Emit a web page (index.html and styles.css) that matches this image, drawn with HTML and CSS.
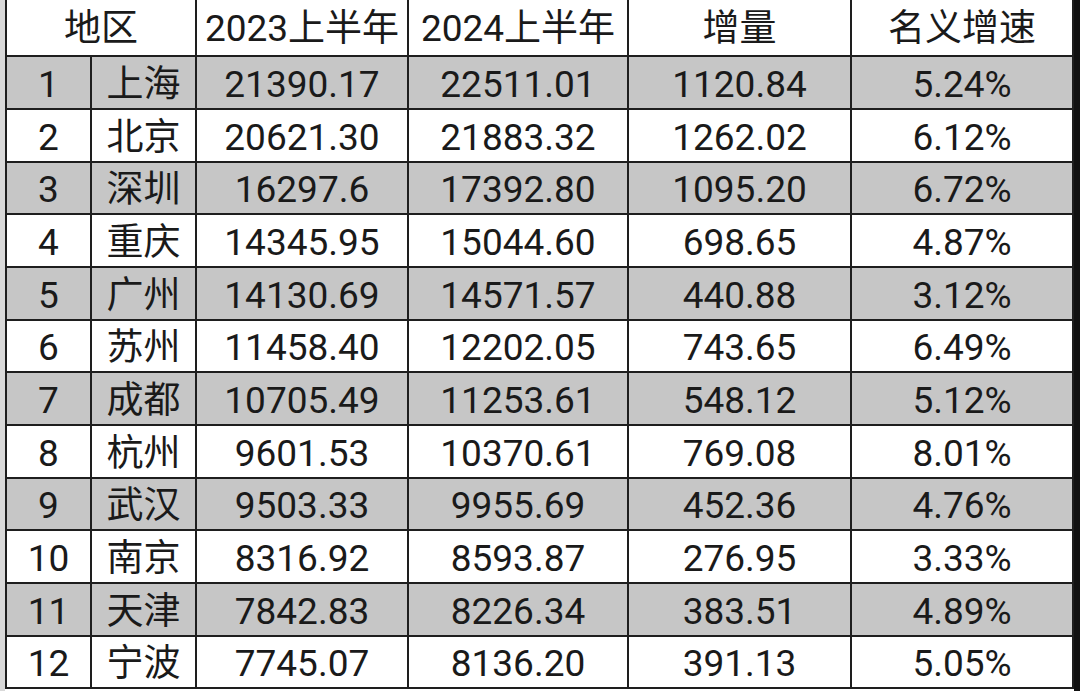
FILE: index.html
```html
<!DOCTYPE html>
<html lang="zh-CN">
<head>
<meta charset="utf-8">
<title>2024上半年城市GDP</title>
<link rel="stylesheet" href="styles.css">
</head>
<body>
<div class="frame">
  <div class="edge-left"></div>
  <table class="gdp">
    <colgroup>
      <col class="c-rank"><col class="c-city"><col class="c-y23"><col class="c-y24"><col class="c-inc"><col class="c-rate">
    </colgroup>
    <thead>
      <tr class="head"><th colspan="2">地区</th><th>2023上半年</th><th>2024上半年</th><th>增量</th><th>名义增速</th></tr>
    </thead>
    <tbody>
      <tr class="g r53"><td>1</td><td>上海</td><td>21390.17</td><td>22511.01</td><td>1120.84</td><td>5.24%</td></tr>
      <tr class="w r53"><td>2</td><td>北京</td><td>20621.30</td><td>21883.32</td><td>1262.02</td><td>6.12%</td></tr>
      <tr class="g r52"><td>3</td><td>深圳</td><td>16297.6</td><td>17392.80</td><td>1095.20</td><td>6.72%</td></tr>
      <tr class="w r53"><td>4</td><td>重庆</td><td>14345.95</td><td>15044.60</td><td>698.65</td><td>4.87%</td></tr>
      <tr class="g r53"><td>5</td><td>广州</td><td>14130.69</td><td>14571.57</td><td>440.88</td><td>3.12%</td></tr>
      <tr class="w r52"><td>6</td><td>苏州</td><td>11458.40</td><td>12202.05</td><td>743.65</td><td>6.49%</td></tr>
      <tr class="g r53"><td>7</td><td>成都</td><td>10705.49</td><td>11253.61</td><td>548.12</td><td>5.12%</td></tr>
      <tr class="w r53"><td>8</td><td>杭州</td><td>9601.53</td><td>10370.61</td><td>769.08</td><td>8.01%</td></tr>
      <tr class="g r52"><td>9</td><td>武汉</td><td>9503.33</td><td>9955.69</td><td>452.36</td><td>4.76%</td></tr>
      <tr class="w r53"><td>10</td><td>南京</td><td>8316.92</td><td>8593.87</td><td>276.95</td><td>3.33%</td></tr>
      <tr class="g r53"><td>11</td><td>天津</td><td>7842.83</td><td>8226.34</td><td>383.51</td><td>4.89%</td></tr>
      <tr class="w r52"><td>12</td><td>宁波</td><td>7745.07</td><td>8136.20</td><td>391.13</td><td>5.05%</td></tr>
    </tbody>
  </table>
  <div class="edge-right"></div>
</div>
</body>
</html>
```
FILE: styles.css
```css
html, body {
  margin: 0;
  padding: 0;
  background: #ffffff;
  overflow: hidden;
}

.frame {
  display: flex;
  width: 1080px;
  height: 691px;
  overflow: hidden;
}

.edge-left {
  width: 5px;
  flex: 0 0 5px;
  background: #d9d9d9;
}

.edge-right {
  flex: 1 1 auto;
  background: #111111;
}

.gdp {
  flex: 0 0 1069px;
  width: 1069px;
  table-layout: fixed;
  border-collapse: collapse;
  font-family: Roboto, "Noto Sans CJK SC", sans-serif;
  font-size: 37px;
  color: #1a1a1a;
  align-self: flex-start;
}

.c-rank { width: 85px; }
.c-city { width: 105px; }
.c-y23 { width: 212px; }
.c-y24 { width: 220px; }
.c-inc { width: 223px; }
.c-rate { width: 222px; }

.gdp th,
.gdp td {
  border: 2px solid #1e1e1e;
  padding: 0;
  text-align: center;
  vertical-align: middle;
  font-weight: 400;
  line-height: 1;
  white-space: nowrap;
}

.gdp thead th {
  border-top: none;
  height: 54px;
  padding-top: 1px;
  background: #ffffff;
}

.g td { background: #c6c6c6; }
.w td { background: #ffffff; }

.gdp td {
  padding-top: 3px;
}

.r53 td { height: 48px; }
.r52 td { height: 47px; }
```
